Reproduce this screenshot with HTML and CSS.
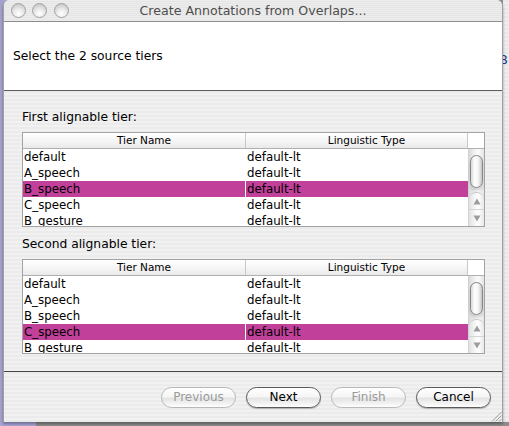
FILE: index.html
```html
<!DOCTYPE html>
<html>
<head>
<meta charset="utf-8">
<link rel="stylesheet" href="styles.css">
</head>
<body>
<div class="desktop">
  <div class="edge-left"></div>
  <div class="window">
    <div class="titlebar">
      <div class="lights"><span class="light"></span><span class="light"></span><span class="light"></span></div>
      <div class="title">Create Annotations from Overlaps...</div>
      <div></div>
    </div>
    <div class="header">Select the 2 source tiers</div>
    <div class="content">
      <div class="label">First alignable tier:</div>
      <div class="tbl">
        <div class="thead"><div class="th c1">Tier Name</div><div class="th c2">Linguistic Type</div><div class="corner"></div></div>
        <div class="tbody">
          <div class="rows">
            <div class="row"><div class="td">default</div><div class="td">default-lt</div></div>
            <div class="row"><div class="td">A_speech</div><div class="td">default-lt</div></div>
            <div class="row sel"><div class="td">B_speech</div><div class="td">default-lt</div></div>
            <div class="row"><div class="td">C_speech</div><div class="td">default-lt</div></div>
            <div class="row"><div class="td">B_gesture</div><div class="td">default-lt</div></div>
          </div>
          <div class="vscroll">
            <div class="track"><div class="thumb"></div></div>
            <div class="arrows">
              <div class="arrow"><svg width="8" height="7" viewBox="0 0 8 7"><polygon points="4,0.5 7.5,6.5 0.5,6.5" fill="#9c9c9c"/></svg></div>
              <div class="arrow"><svg width="8" height="7" viewBox="0 0 8 7"><polygon points="0.5,0.5 7.5,0.5 4,6.5" fill="#9c9c9c"/></svg></div>
            </div>
          </div>
        </div>
      </div>
      <div class="label second">Second alignable tier:</div>
      <div class="tbl">
        <div class="thead"><div class="th c1">Tier Name</div><div class="th c2">Linguistic Type</div><div class="corner"></div></div>
        <div class="tbody">
          <div class="rows">
            <div class="row"><div class="td">default</div><div class="td">default-lt</div></div>
            <div class="row"><div class="td">A_speech</div><div class="td">default-lt</div></div>
            <div class="row"><div class="td">B_speech</div><div class="td">default-lt</div></div>
            <div class="row sel"><div class="td">C_speech</div><div class="td">default-lt</div></div>
            <div class="row"><div class="td">B_gesture</div><div class="td">default-lt</div></div>
          </div>
          <div class="vscroll">
            <div class="track"><div class="thumb"></div></div>
            <div class="arrows">
              <div class="arrow"><svg width="8" height="7" viewBox="0 0 8 7"><polygon points="4,0.5 7.5,6.5 0.5,6.5" fill="#9c9c9c"/></svg></div>
              <div class="arrow"><svg width="8" height="7" viewBox="0 0 8 7"><polygon points="0.5,0.5 7.5,0.5 4,6.5" fill="#9c9c9c"/></svg></div>
            </div>
          </div>
        </div>
      </div>
    </div>
    <div class="footer">
      <div class="btn dis">Previous</div>
      <div class="btn">Next</div>
      <div class="btn dis">Finish</div>
      <div class="btn">Cancel</div>
      <svg class="grip" width="12" height="12" viewBox="0 0 12 12">
        <line x1="11.5" y1="2" x2="2" y2="11.5" stroke="#9a9a9a" stroke-width="1"/>
        <line x1="11.5" y1="5.5" x2="5.5" y2="11.5" stroke="#9a9a9a" stroke-width="1"/>
        <line x1="11.5" y1="9" x2="9" y2="11.5" stroke="#9a9a9a" stroke-width="1"/>
      </svg>
    </div>
  </div>
  <div class="edge-right"><span class="peek">B</span></div>
</div>
</body>
</html>
```
FILE: styles.css
```css
* { box-sizing: border-box; }
html, body { margin: 0; padding: 0; }
body {
  width: 509px;
  height: 426px;
  overflow: hidden;
  background: #8f8f8f;
  font-family: "DejaVu Sans", "Liberation Sans", sans-serif;
  color: #000;
}
.desktop {
  display: flex;
  align-items: flex-start;
  width: 509px;
  height: 426px;
  background: linear-gradient(to right, #a9a6d8 0 36px, #8d8d8d 36px);
}
.edge-left {
  width: 3px;
  height: 422px;
  flex: none;
  background: #a4a2cc;
}
.window {
  width: 500px;
  height: 422px;
  flex: none;
  display: flex;
  flex-direction: column;
  border-left: 1px solid #a0a0a0;
  border-right: 1px solid #a0a0a0;
  border-radius: 6px 6px 0 0;
  overflow: hidden;
  position: relative;
  background: #ececec;
  box-shadow: 0 2px 3px rgba(0,0,0,0.35);
}
.edge-right {
  flex: 1;
  height: 422px;
  background: repeating-linear-gradient(#e8e8e8 0 2px, #efefef 2px 4px);
  overflow: hidden;
  font-size: 13px;
  color: #1c3f8f;
  padding-top: 52px;
}
.peek { display: block; margin-left: -4px; }

.titlebar {
  height: 22px;
  flex: none;
  border-bottom: 1px solid #8c8c8c;
  background: repeating-linear-gradient(#ededed 0 1px, #e5e5e5 1px 2px);
  display: grid;
  grid-template-columns: 1fr auto 1fr;
  align-items: center;
}
.lights { display: flex; gap: 6.5px; padding-left: 6.5px; }
.light {
  width: 15px;
  height: 15px;
  border-radius: 50%;
  border: 1px solid #a2a2a2;
  background: radial-gradient(circle at 50% 75%, #ffffff 0, #eeeeee 35%, #cfcfcf 75%, #bdbdbd 100%);
}
.title {
  font-size: 12.6px;
  color: #4e4e4e;
  line-height: 21px;
  white-space: nowrap;
}

.header {
  height: 69px;
  flex: none;
  background: #fff;
  border-bottom: 1px solid #5c5c5c;
  display: flex;
  align-items: center;
  padding-left: 9px;
  font-size: 12.3px;
}

.content {
  height: 280px;
  flex: none;
  padding: 18px 17px 0 18px;
  background: repeating-linear-gradient(#ebebeb 0 2px, #f1f1f1 2px 4px);
  display: flex;
  flex-direction: column;
}
.label {
  height: 16px;
  line-height: 16px;
  font-size: 12.3px;
  margin-bottom: 7px;
  white-space: nowrap;
}
.label.second { margin-top: 9px; }

.tbl {
  height: 95px;
  flex: none;
  border: 1px solid #a3a3a3;
  background: #fff;
  display: flex;
  flex-direction: column;
}
.thead {
  height: 16px;
  flex: none;
  display: flex;
  border-bottom: 1px solid #b0b0b0;
  background: linear-gradient(#ffffff, #f4f4f4 60%, #e9e9e9);
  font-size: 10.5px;
  line-height: 15px;
}
.th {
  text-align: center;
  padding-left: 20px;
  border-right: 1px solid #c8c8c8;
  white-space: nowrap;
}
.th.c1 { width: 223px; }
.th.c2 { width: 222px; }
.corner { flex: 1; background: #fff; }

.tbody { flex: 1; display: flex; overflow: hidden; }
.rows { width: 445px; flex: none; }
.row { display: flex; gap: 1px; height: 16px; }
.td {
  width: 222px;
  padding-left: 1px;
  font-size: 11.8px;
  line-height: 16px;
  white-space: nowrap;
}
.row.sel .td { background: #c0409a; }

.vscroll {
  width: 16px;
  flex: none;
  display: flex;
  flex-direction: column;
  border-left: 1px solid #d2d2d2;
  background: linear-gradient(to right, #dadada, #f2f2f2 40%, #fcfcfc 60%, #e4e4e4);
}
.track { flex: 1; }
.thumb {
  margin: 6px 1px 0 1px;
  height: 33px;
  border: 1px solid #858585;
  border-radius: 7px;
  background: linear-gradient(to right, #d9d9d9, #ffffff 35%, #f4f4f4 65%, #c6c6c6);
  box-shadow: 0 3px 3px rgba(0,0,0,0.15);
}
.arrows {
  height: 34px;
  flex: none;
  display: flex;
  flex-direction: column;
  border-top: 1px solid #c9c9c9;
  border-radius: 7px 7px 0 0;
  background: linear-gradient(to right, #e2e2e2, #f8f8f8 45%, #ffffff 60%, #e8e8e8);
}
.arrow {
  flex: 1;
  display: flex;
  align-items: center;
  justify-content: center;
}
.arrow + .arrow { border-top: 1px solid #d4d4d4; }

.footer {
  height: 51px;
  flex: none;
  border-top: 1px solid #454545;
  background: repeating-linear-gradient(#ebebeb 0 2px, #f1f1f1 2px 4px);
  display: flex;
  justify-content: flex-end;
  align-items: flex-start;
  gap: 10px;
  padding: 15px 11px 0 0;
  position: relative;
}
.btn {
  width: 75px;
  height: 21px;
  border-radius: 11px;
  border: 1px solid #5a5a5a;
  background: linear-gradient(#ffffff, #f6f6f6 45%, #e4e4e4 55%, #f4f4f4 85%, #ffffff);
  font-size: 12px;
  line-height: 19px;
  text-align: center;
  color: #000;
  box-shadow: 0 1px 1px rgba(0,0,0,0.25);
}
.btn.dis {
  border-color: #b8b8b8;
  color: #9a9a9a;
  box-shadow: none;
}
.grip { position: absolute; right: 0; bottom: 0; }
```
